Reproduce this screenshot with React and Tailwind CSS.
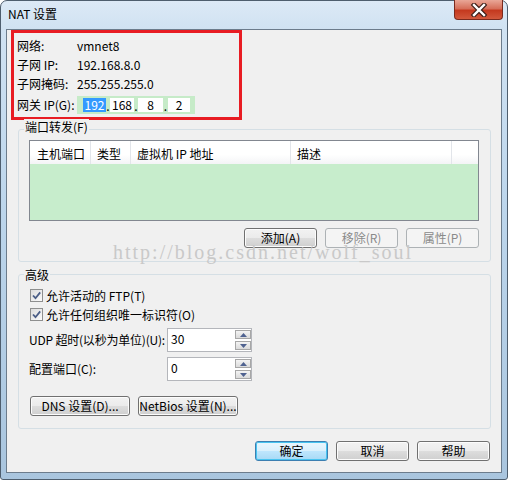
import React from 'react';

const BTN = 'h-[20px] rounded-[3px] border flex items-center justify-center text-[12px] leading-none';
const BTN_NORMAL = `${BTN} border-[#707070] text-black bg-[linear-gradient(180deg,#f2f2f2_0%,#ebebeb_50%,#dddddd_51%,#cfcfcf_100%)] shadow-[inset_0_0_0_1px_#fcfcfc]`;
const BTN_DISABLED = `${BTN} border-[#adb2b5] text-[#8a8a8a] bg-[#f4f4f4]`;
const BTN_DEFAULT = `${BTN} border-[#3c7fb1] text-black bg-[linear-gradient(180deg,#eaf6fd_0%,#d9f0fc_50%,#bee6fd_51%,#a7d9f5_100%)] shadow-[inset_0_0_0_1px_#48c4f0]`;

function CheckBox() {
  return (
    <span className="w-[13px] h-[13px] border border-[#8e8f8f] bg-[linear-gradient(135deg,#dcdcdc,#fbfbfb)] flex items-center justify-center shrink-0">
      <svg width="11" height="11" viewBox="0 0 11 11">
        <path d="M2 5.5 L4.5 8.2 L9.2 2.4" fill="none" stroke="#4a5d86" strokeWidth="1.8" />
      </svg>
    </span>
  );
}

function SpinBtn({ up }) {
  return (
    <span className="h-[9px] w-[16px] border border-[#a7a7a7] bg-[linear-gradient(180deg,#f4f4f4,#dadada)] flex items-center justify-center">
      <svg width="7" height="4" viewBox="0 0 7 4">
        {up ? <path d="M0 4 L3.5 0 L7 4 Z" fill="#4f6290" /> : <path d="M0 0 L7 0 L3.5 4 Z" fill="#4f6290" />}
      </svg>
    </span>
  );
}

function SpinInput({ value }) {
  return (
    <div className="w-[85px] h-[24px] shrink-0 border border-[#b4b6bb] bg-white flex">
      <span className="flex-1 pl-[3px] pb-[2px] flex items-center leading-none">{value}</span>
      <div className="flex flex-col gap-[2px] py-px">
        <SpinBtn up />
        <SpinBtn />
      </div>
    </div>
  );
}

export default function App() {
  return (
    <div className="w-[508px] h-[480px] overflow-hidden font-['Noto_Sans_CJK_SC',sans-serif] text-[12px] text-black">
      <div className="w-full h-full flex flex-col border border-[#4e5e6e] rounded-t-[7px] rounded-b-[3px] bg-[linear-gradient(180deg,#dce9f6_0px,#d0e2f2_28px,#bdd6ec_200px,#a9c5de_480px)]">
        {/* title bar */}
        <div className="h-[28px] flex items-start shrink-0">
          <span className="pl-[7px] pt-[5px] leading-[16px]">NAT 设置</span>
          <div className="ml-auto mr-[4px] -mt-px w-[49px] h-[20px] rounded-b-[4px] border border-[#7a2a1e] border-t-0 bg-[linear-gradient(180deg,#e9a797_0%,#d66f5a_45%,#c4391f_55%,#d2583c_100%)] flex items-center justify-center">
            <svg width="20" height="14" viewBox="0 0 20 14">
              <path d="M5 2 L15 12 M15 2 L5 12" stroke="#3b1e18" strokeWidth="4.6" strokeLinecap="square" />
              <path d="M5 2 L15 12 M15 2 L5 12" stroke="#ffffff" strokeWidth="2.4" strokeLinecap="square" />
            </svg>
          </div>
        </div>

        {/* client area */}
        <div className="mx-[5px] mb-[6px] flex-1 border border-[#6c7c8c] bg-[#f0f0f0] relative flex flex-col">
          <div className="ml-[4px] w-[231px] h-[90px] border-[3px] border-[#e81c23] pl-[3px] pt-[4px]">
            <div className="flex items-center h-[18px]">
              <span className="w-[60px]">网络:</span>
              <span>vmnet8</span>
            </div>
            <div className="flex items-center h-[19px]">
              <span className="w-[60px]">子网 IP:</span>
              <span>192.168.8.0</span>
            </div>
            <div className="flex items-center h-[19px]">
              <span className="w-[60px]">子网掩码:</span>
              <span>255.255.255.0</span>
            </div>
            <div className="mt-[3px] flex items-center h-[18px]">
              <span className="w-[60px]">网关 IP(G):</span>
              <div className="w-[118px] h-[18px] bg-[#c6ebc8] flex items-center pl-[6px] leading-none">
                <span className="w-[23px] h-[14px] bg-[#3399ff] text-white flex items-center justify-center">192</span>
                <span className="w-[4px] h-[14px] flex items-end justify-center">.</span>
                <span className="w-[24px] h-[14px] bg-white flex items-center justify-center">168</span>
                <span className="w-[4px] h-[14px] flex items-end justify-center">.</span>
                <span className="w-[25px] h-[14px] bg-white flex items-center justify-center">8</span>
                <span className="w-[5px] h-[14px] flex items-end justify-center">.</span>
                <span className="w-[22px] h-[14px] bg-white flex items-center justify-center">2</span>
              </div>
            </div>
          </div>

          {/* 端口转发 */}
          <div className="mt-[9px] ml-[11px] w-[473px] h-[133px] border border-[#d5dfe5] rounded-[3px] relative pt-[10px] pl-[10px]">
            <span className="absolute left-[5px] -top-[11px] px-px bg-[#f0f0f0] leading-[16px]">端口转发(F)</span>
            <div className="w-[450px] h-[81px] border border-[#828790] flex flex-col">
              <div className="h-[23px] flex bg-[linear-gradient(180deg,#ffffff_0%,#ffffff_60%,#f3f4f6_100%)] leading-none">
                <span className="w-[61px] border-r border-[#e2e5ea] pl-[7px] pt-[2px] flex items-center">主机端口</span>
                <span className="w-[40px] border-r border-[#e2e5ea] pl-[6px] pt-[2px] flex items-center">类型</span>
                <span className="w-[160px] border-r border-[#e2e5ea] pl-[6px] pt-[2px] flex items-center">虚拟机 IP 地址</span>
                <span className="w-[161px] border-r border-[#e2e5ea] pl-[6px] pt-[2px] flex items-center">描述</span>
                <span className="flex-1" />
              </div>
              <div className="flex-1 bg-[#c7edcc]" />
            </div>
            <div className="mt-[7px] w-[450px] flex justify-end gap-[8px]">
              <button className={`${BTN_NORMAL} w-[73px]`}>添加(A)</button>
              <button className={`${BTN_DISABLED} w-[73px]`}>移除(R)</button>
              <button className={`${BTN_DISABLED} w-[73px]`}>属性(P)</button>
            </div>
          </div>

          {/* 高级 */}
          <div className="mt-[12px] ml-[11px] w-[473px] h-[155px] border border-[#d5dfe5] rounded-[3px] relative pt-[11px] pl-[10px]">
            <span className="absolute left-[5px] -top-[8px] px-px bg-[#f0f0f0] leading-[16px]">高级</span>
            <div className="flex items-center h-[19px] pl-px gap-[3px]">
              <CheckBox />
              <span>允许活动的 FTP(T)</span>
            </div>
            <div className="flex items-center h-[19px] pl-px gap-[3px]">
              <CheckBox />
              <span>允许任何组织唯一标识符(O)</span>
            </div>
            <div className="mt-[4px] flex items-center">
              <span className="w-[138px] shrink-0 whitespace-nowrap tracking-[-0.2px]">UDP 超时(以秒为单位)(U):</span>
              <SpinInput value="30" />
            </div>
            <div className="mt-[5px] flex items-center">
              <span className="w-[138px] shrink-0 whitespace-nowrap">配置端口(C):</span>
              <SpinInput value="0" />
            </div>
            <div className="mt-[15px] pl-px flex gap-[8px]">
              <button className={`${BTN_NORMAL} w-[100px]`}>DNS 设置(D)...</button>
              <button className={`${BTN_NORMAL} w-[100px]`}>NetBios 设置(N)...</button>
            </div>
          </div>

          <div className="mt-[12px] pr-[11px] flex justify-end gap-[8px]">
            <button className={`${BTN_DEFAULT} w-[73px]`}>确定</button>
            <button className={`${BTN_NORMAL} w-[73px]`}>取消</button>
            <button className={`${BTN_NORMAL} w-[73px]`}>帮助</button>
          </div>

          <span className="absolute left-[106px] top-[212px] pointer-events-none font-['Liberation_Serif',serif] text-[20px] leading-[20px] tracking-[2px] text-[#c9c9c9] whitespace-nowrap">
            http://blog.csdn.net/wolf_soul
          </span>
        </div>
      </div>
    </div>
  );
}
